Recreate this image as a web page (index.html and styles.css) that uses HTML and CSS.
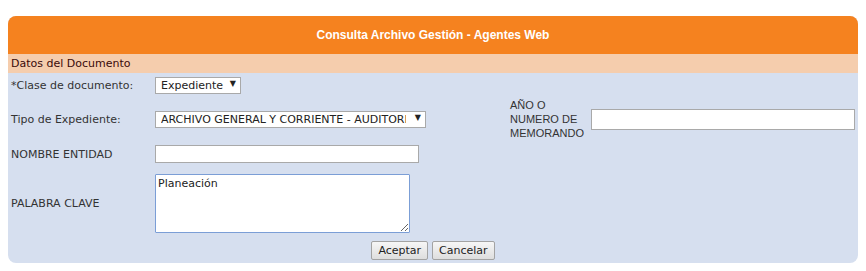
FILE: index.html
```html
<!DOCTYPE html>
<html lang="es">

<head>
    <meta charset="UTF-8">
    <title>Consulta Archivo Gestión - Agentes Web</title>
    <link rel="stylesheet" href="styles.css">
</head>

<body>

    <div class="panel">
        <div class="panel-title">Consulta Archivo Gestión - Agentes Web</div>
        <div class="panel-section">Datos del Documento</div>

        <form class="form-grid">
            <label class="lbl" for="clase">*Clase de documento:</label>
            <div class="cell-wide">
                <span class="select-wrap sel-small">
                    <select id="clase">
                        <option>Expediente</option>
                    </select>
                </span>
            </div>

            <label class="lbl" for="tipo">Tipo de Expediente:</label>
            <div>
                <span class="select-wrap sel-large">
                    <select id="tipo">
                        <option>ARCHIVO GENERAL Y CORRIENTE - AUDITORIA</option>
                    </select>
                </span>
            </div>
            <label class="lbl-alt" for="memo">AÑO O NUMERO DE MEMORANDO</label>
            <div><input type="text" id="memo" class="txt txt-memo"></div>

            <label class="lbl" for="entidad">NOMBRE ENTIDAD</label>
            <div class="cell-wide"><input type="text" id="entidad" class="txt txt-entidad"></div>

            <label class="lbl" for="clave">PALABRA CLAVE</label>
            <div class="cell-wide"><textarea id="clave" class="area">Planeación</textarea></div>

            <div class="actions">
                <button type="button" class="btn">Aceptar</button>
                <button type="button" class="btn">Cancelar</button>
            </div>
        </form>
    </div>

</body>

</html>
```

FILE: styles.css
```css
body {
    margin: 8px;
    background-color: #fff;
    font-family: "DejaVu Sans", Verdana, sans-serif;
    font-size: 11px;
    color: #333;
}

.panel {
    margin-top: 8px;
    width: 850px;
    background-color: #d6dfef;
    border-radius: 8px;
    overflow: hidden;
}

.panel-title {
    height: 38px;
    line-height: 38px;
    background-color: #f5821f;
    color: #fff;
    text-align: center;
    font-family: "Liberation Sans", Arial, sans-serif;
    font-weight: bold;
    font-size: 12px;
}

.panel-section {
    height: 19px;
    line-height: 19px;
    padding-left: 3px;
    background-color: #f5cdad;
    color: #3a0a0a;
}

.form-grid {
    display: grid;
    grid-template-columns: 147px 355px 81px 267px;
    grid-template-rows: 24px 44px 26px 73px 21px;
    align-items: center;
    padding-bottom: 2px;
}

.lbl {
    padding-left: 3px;
}

.lbl-alt {
    font-family: "Liberation Sans", Arial, sans-serif;
    font-size: 11px;
    line-height: 14px;
    padding-right: 8px;
}

.cell-wide {
    grid-column: 2 / 5;
}

/* select con flecha propia */
.select-wrap {
    position: relative;
    display: inline-block;
}

.select-wrap select {
    appearance: none;
    -webkit-appearance: none;
    display: block;
    height: 17px;
    padding: 0 19px 0 5px;
    border: 1px solid #a9a9a9;
    border-radius: 0;
    background-color: #fff;
    font-family: "DejaVu Sans", Verdana, sans-serif;
    font-size: 11px;
    color: #222;
}

.select-wrap::after {
    content: "\25BC";
    position: absolute;
    right: 5px;
    top: 2px;
    font-size: 8px;
    color: #222;
    pointer-events: none;
}

.sel-small select {
    width: 86px;
    padding-right: 4px;
}

.sel-large select {
    width: 271px;
}

.txt {
    display: block;
    box-sizing: border-box;
    border: 1px solid #a9a9a9;
    background-color: #fff;
    padding: 1px 3px;
    font-family: "DejaVu Sans", Verdana, sans-serif;
    font-size: 11px;
}

.txt-memo {
    width: 264px;
    height: 21px;
}

.txt-entidad {
    width: 264px;
    height: 18px;
}

.area {
    display: block;
    box-sizing: border-box;
    width: 255px;
    height: 59px;
    margin: 0;
    padding: 2px 2px;
    border: 1px solid #7b9ed6;
    border-radius: 1px;
    outline: none;
    background-color: #fff;
    font-family: "DejaVu Sans", Verdana, sans-serif;
    font-size: 11px;
    color: #222;
}

.actions {
    grid-column: 1 / 5;
    display: flex;
    justify-content: center;
    gap: 4px;
}

.btn {
    height: 19px;
    padding: 0 6px;
    border: 1px solid #a3a3a3;
    border-radius: 2px;
    background: linear-gradient(#f6f6f6, #dedede);
    font-family: "DejaVu Sans", Verdana, sans-serif;
    font-size: 11px;
    color: #222;
}
```
